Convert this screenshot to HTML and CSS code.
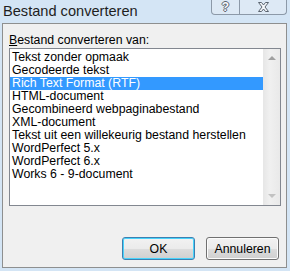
FILE: index.html
```html
<!DOCTYPE html>
<html>
  <head>
    <title>Bestand converteren</title>
    <link rel="stylesheet" href="styles.css">
  </head>

  <body>
    <div class="window">
      <div class="titlebar">
        <span class="title">Bestand converteren</span>
        <div class="caption-buttons">
          <span class="caption-btn help">?</span>
          <span class="caption-btn close">
            <svg width="13" height="10" viewBox="0 0 13 10">
              <path d="M1.5 0.5 H4.5 L6.5 3 L8.5 0.5 H11.5 L8 5 L11.5 9.5 H8.5 L6.5 7 L4.5 9.5 H1.5 L5 5 Z"
                    fill="#f4f7fa" stroke="#5a6470" stroke-width="1" stroke-linejoin="round"/>
            </svg>
          </span>
        </div>
      </div>

      <div class="client">
        <div class="label"><u>B</u>estand converteren van:</div>
        <div class="listbox">
          <ul class="items">
            <li>Tekst zonder opmaak</li>
            <li>Gecodeerde tekst</li>
            <li class="selected">Rich Text Format (RTF)</li>
            <li>HTML-document</li>
            <li>Gecombineerd webpaginabestand</li>
            <li>XML-document</li>
            <li>Tekst uit een willekeurig bestand herstellen</li>
            <li>WordPerfect 5.x</li>
            <li>WordPerfect 6.x</li>
            <li>Works 6 - 9-document</li>
          </ul>
          <div class="scrollbar">
            <span class="arrow up"></span>
            <span class="arrow down"></span>
          </div>
        </div>
        <div class="buttons">
          <button class="btn default">OK</button>
          <button class="btn">Annuleren</button>
        </div>
      </div>
    </div>
  </body>
</html>
```

FILE: styles.css
```css
body {
  margin: 0;
  font-family: "Liberation Sans", Arial, sans-serif;
  font-size: 12.3px;
  color: #000;
}

.window {
  width: 290px;
  height: 271px;
  background-color: #d4e5f5;
  display: flex;
  flex-direction: column;
}

.titlebar {
  height: 23px;
  display: flex;
  justify-content: space-between;
  align-items: flex-start;
}

.title {
  font-size: 14.6px;
  padding: 3px 0 0 3px;
  color: #1e1e1e;
}

.caption-buttons {
  display: flex;
  margin-right: 3px;
}

.caption-btn {
  height: 14px;
  border: 1px solid #8c99a8;
  border-top: none;
  background-color: #dde9f5;
  display: flex;
  justify-content: center;
  align-items: center;
}

.help {
  width: 27px;
  border-radius: 0 0 0 4px;
  color: #f4f7fa;
  font-size: 12px;
  font-weight: bold;
  text-shadow: 1px 0 0 #5a6470, -1px 0 0 #5a6470, 0 1px 0 #5a6470, 0 -1px 0 #5a6470;
}

.close {
  width: 46px;
  border-left: none;
  border-radius: 0 0 4px 0;
}

.client {
  flex: 1;
  margin: 0 3px 3px 2px;
  border: 1px solid #8e8f8f;
  background-color: #f0f0f0;
  padding: 0 5px 0 6px;
}

.label {
  margin-top: 9px;
  height: 15px;
}

.listbox {
  height: 156px;
  border: 1px solid #828790;
  background-color: #fff;
  display: flex;
}

.items {
  flex: 1;
  list-style: none;
  margin: 2px 0 0 0;
  padding: 0;
}

.items li {
  height: 13px;
  line-height: 13px;
  padding-left: 2px;
  white-space: nowrap;
}

.items li.selected {
  background-color: #3399ff;
  color: #fff;
}

.scrollbar {
  width: 17px;
  background: linear-gradient(to right, #e6e6e6, #f0f0f0 40%, #e9e9e9);
  display: flex;
  flex-direction: column;
  justify-content: space-between;
  align-items: center;
  padding: 7px 0;
}

.arrow {
  width: 0;
  height: 0;
  border-left: 4px solid transparent;
  border-right: 4px solid transparent;
}

.arrow.up {
  border-bottom: 4px solid #a0a0a0;
}

.arrow.down {
  border-top: 4px solid #c2c2c2;
}

.buttons {
  display: flex;
  justify-content: flex-end;
  gap: 11px;
  margin-top: 31px;
  padding-right: 2px;
}

.btn {
  width: 73px;
  height: 23px;
  font-family: "Liberation Sans", Arial, sans-serif;
  font-size: 12.3px;
  border: 1px solid #707070;
  border-radius: 3px;
  background: linear-gradient(#f2f2f2 0%, #ebebeb 50%, #dddddd 51%, #cfcfcf 100%);
  box-shadow: inset 0 0 0 1px #fcfcfc;
  padding: 0;
}

.btn.default {
  border-color: #3c7fb1;
  box-shadow: inset 0 0 0 1px #48d3fb;
}
```
